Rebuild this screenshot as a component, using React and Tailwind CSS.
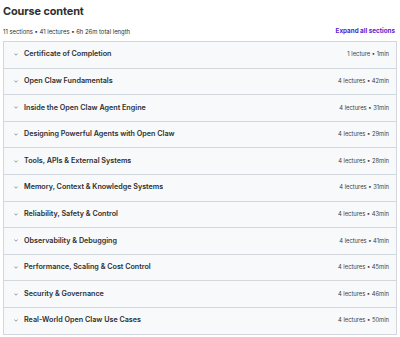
const sections = [
  { title: "Certificate of Completion", meta: "1 lecture • 1min" },
  { title: "Open Claw Fundamentals", meta: "4 lectures • 42min" },
  { title: "Inside the Open Claw Agent Engine", meta: "4 lectures • 31min" },
  { title: "Designing Powerful Agents with Open Claw", meta: "4 lectures • 29min" },
  { title: "Tools, APIs & External Systems", meta: "4 lectures • 28min" },
  { title: "Memory, Context & Knowledge Systems", meta: "4 lectures • 31min" },
  { title: "Reliability, Safety & Control", meta: "4 lectures • 43min" },
  { title: "Observability & Debugging", meta: "4 lectures • 41min" },
  { title: "Performance, Scaling & Cost Control", meta: "4 lectures • 45min" },
  { title: "Security & Governance", meta: "4 lectures • 46min" },
  { title: "Real-World Open Claw Use Cases", meta: "4 lectures • 50min" },
];

function Chevron() {
  return (
    <svg width="4" height="3" viewBox="0 0 4 3" fill="none" className="shrink-0">
      <path d="M0.4 0.7 L2 2.2 L3.6 0.7" stroke="#6a6f73" strokeWidth="0.7" />
    </svg>
  );
}

export default function App() {
  return (
    <div
      className="w-[400px] h-[337px] bg-white text-[#2d2f31] overflow-hidden"
      style={{ fontFamily: "Inter, 'Liberation Sans', sans-serif" }}
    >
      {/* Header */}
      <div className="px-[3px] pt-[3px]">
        <h2 className="text-[10.9px] font-bold leading-[16px] tracking-[-0.1px]">Course content</h2>
      </div>

      <div className="flex items-center justify-between pl-[3px] pr-[5px] mt-[7px] h-[12px]">
        <div className="text-[5.9px] text-[#2d2f31]">11 sections • 41 lectures • 6h 26m total length</div>
        <div className="text-[6.3px] font-bold text-[#5624d0]">Expand all sections</div>
      </div>

      {/* Sections */}
      <div className="mx-[3px] w-[394px] mt-[3px] border border-[#d1d7dc]">
        {sections.map((s, i) => (
          <div
            key={s.title}
            className={`flex items-center justify-between bg-[#f7f9fa] pl-[10px] pr-[7px] ${i > 0 ? "h-[26.6px] border-t border-[#d1d7dc]" : "h-[25.6px]"}`}
          >
            <div className="flex items-center gap-[6px] min-w-0">
              <Chevron />
              <div className="text-[7.2px] font-semibold text-[#2d2f31] truncate">{s.title}</div>
            </div>
            <div className="text-[5.8px] text-[#3e4143] whitespace-nowrap">{s.meta}</div>
          </div>
        ))}
      </div>
    </div>
  );
}
